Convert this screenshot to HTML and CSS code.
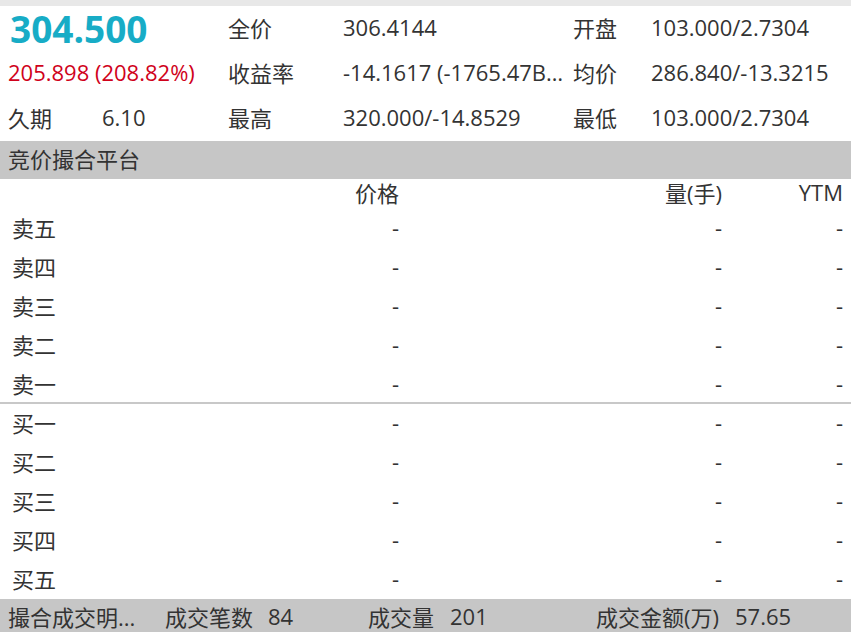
FILE: index.html
```html
<!DOCTYPE html>
<html lang="zh-CN">
<head>
<meta charset="utf-8">
<title>竞价撮合平台</title>
<link rel="stylesheet" href="styles.css">
</head>
<body>
<div class="page">
  <div class="topstrip"></div>
  <div class="quote">
    <div class="qrow">
      <div class="c1"><span class="price">304.500</span></div>
      <div class="c2"><span class="lbl">全价</span><span class="val">306.4144</span></div>
      <div class="c3"><span class="lbl">开盘</span><span class="val">103.000/2.7304</span></div>
    </div>
    <div class="qrow">
      <div class="c1"><span class="chg">205.898 (208.82%)</span></div>
      <div class="c2"><span class="lbl">收益率</span><span class="val ell">-14.1617 (-1765.47BP)</span></div>
      <div class="c3"><span class="lbl">均价</span><span class="val">286.840/-13.3215</span></div>
    </div>
    <div class="qrow">
      <div class="c1"><span class="lbl1">久期</span><span class="val">6.10</span></div>
      <div class="c2"><span class="lbl">最高</span><span class="val">320.000/-14.8529</span></div>
      <div class="c3"><span class="lbl">最低</span><span class="val">103.000/2.7304</span></div>
    </div>
  </div>
  <div class="section">竞价撮合平台</div>
  <div class="book">
    <div class="brow head"><span class="name"></span><span class="p">价格</span><span class="q">量(手)</span><span class="y">YTM</span></div>
    <div class="side sell">
      <div class="brow"><span class="name">卖五</span><span class="p">-</span><span class="q">-</span><span class="y">-</span></div>
      <div class="brow"><span class="name">卖四</span><span class="p">-</span><span class="q">-</span><span class="y">-</span></div>
      <div class="brow"><span class="name">卖三</span><span class="p">-</span><span class="q">-</span><span class="y">-</span></div>
      <div class="brow"><span class="name">卖二</span><span class="p">-</span><span class="q">-</span><span class="y">-</span></div>
      <div class="brow last"><span class="name">卖一</span><span class="p">-</span><span class="q">-</span><span class="y">-</span></div>
    </div>
    <div class="side buy">
      <div class="brow"><span class="name">买一</span><span class="p">-</span><span class="q">-</span><span class="y">-</span></div>
      <div class="brow"><span class="name">买二</span><span class="p">-</span><span class="q">-</span><span class="y">-</span></div>
      <div class="brow"><span class="name">买三</span><span class="p">-</span><span class="q">-</span><span class="y">-</span></div>
      <div class="brow"><span class="name">买四</span><span class="p">-</span><span class="q">-</span><span class="y">-</span></div>
      <div class="brow"><span class="name">买五</span><span class="p">-</span><span class="q">-</span><span class="y">-</span></div>
    </div>
  </div>
  <div class="footer">
    <span class="f1">撮合成交明...</span>
    <span class="f2">成交笔数</span><span class="fv2">84</span>
    <span class="f3">成交量</span><span class="fv3">201</span>
    <span class="f4">成交金额(万)</span><span class="fv4">57.65</span>
  </div>
</div>
</body>
</html>
```

FILE: styles.css
```css
* { box-sizing: border-box; }
html, body { margin: 0; padding: 0; background: #fff; }
body {
  font-family: "Open Sans", "Noto Sans CJK SC", sans-serif;
  color: #333;
  font-size: 22px;
}
.page { width: 851px; height: 632px; overflow: hidden; display: flex; flex-direction: column; }
.topstrip { height: 6px; background: #e8e8e8; flex: none; }
.quote { height: 135px; display: flex; flex-direction: column; flex: none; }
.qrow { height: 45px; display: flex; align-items: center; white-space: nowrap; padding-bottom: 4px; }
.c1 { width: 228px; padding-left: 8px; display: flex; align-items: center; }
.c2 { width: 345px; display: flex; align-items: center; }
.c3 { flex: 1; display: flex; align-items: center; }
.c2 .lbl { width: 115px; flex: none; }
.c3 .lbl { width: 78px; flex: none; }
.lbl1 { width: 94px; flex: none; }
.val { white-space: nowrap; }
.ell { width: 222px; overflow: hidden; text-overflow: ellipsis; }
.price { color: #17acc6; font-weight: 700; font-size: 37px; line-height: 1; margin-left: 2px; margin-top: 4px; }
.chg { color: #d0021b; }
.section {
  height: 38px; background: #c6c6c6; flex: none;
  display: flex; align-items: center; padding-left: 8px; padding-bottom: 4px;
}
.book { flex: 1; display: flex; flex-direction: column; }
.brow { display: flex; align-items: center; height: 39px; padding-bottom: 4px; }
.brow.head { height: 30px; padding-bottom: 5px; }
.brow.last { height: 37px; padding-bottom: 2px; }
.sell { border-bottom: 2px solid #c8c8c8; }
.name { width: 180px; padding-left: 12px; flex: none; }
.p { width: 219px; text-align: right; flex: none; }
.q { width: 323px; text-align: right; flex: none; }
.y { width: 121px; text-align: right; flex: none; }
.footer {
  height: 33px; background: #c6c6c6; flex: none;
  display: flex; align-items: center; white-space: nowrap; padding-left: 8px;
}
.f1 { width: 157px; }
.f2 { width: 103px; }
.fv2 { width: 100px; }
.f3 { width: 82px; }
.fv3 { width: 146px; }
.f4 { width: 139px; }
```
